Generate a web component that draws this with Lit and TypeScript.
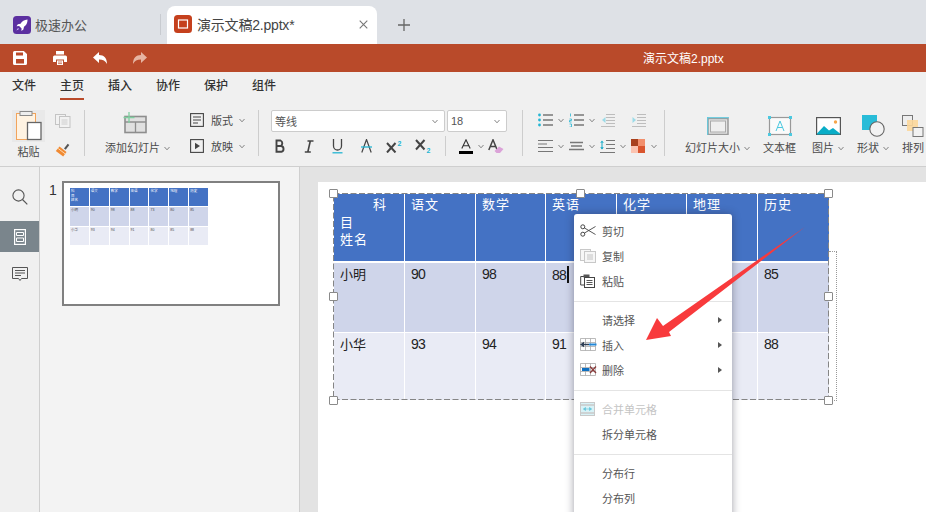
import { LitElement, html, svg, css } from "lit";
import { customElement } from "lit/decorators.js";

const chev = html`<svg class="chev" width="6" height="5" viewBox="0 0 6 5"><path d="M.5 1l2.500 2.800L5.500 1" fill="none" stroke="#777" stroke-width=".9"/></svg>`;
const S = (w: number, h: number, body: unknown) => html`<svg width=${w} height=${h} viewBox="0 0 ${w} ${h}">${body}</svg>`;

const rocket = html`<svg width="18" height="18" viewBox="0 0 18 18"><rect width="18" height="18" rx="3.500" fill="#5b2fa0"/><path d="M14.500 3.500c-3.200.3-5.400 1.800-7 4.200l-2.600.6-1.400 2 2.600-.2 2.500 2.400-.2 2.400 2-1.500.6-2.600c2.200-1.600 3.600-3.900 3.500-6.900z" fill="#fff"/><path d="M5 12l-1.600 2.600L6 13z" fill="#d9c8ff"/></svg>`;
const pptIcon = html`<svg width="18" height="18" viewBox="0 0 18 18"><rect width="18" height="18" rx="3.500" fill="#c5401d"/><rect x="4.500" y="5" width="9" height="8" fill="none" stroke="#fff" stroke-width="1.200"/></svg>`;
const save = S(14, 14, svg`<path d="M1.500 0h9.300L14 3v9.500a1.500 1.500 0 0 1-1.500 1.500h-11A1.500 1.500 0 0 1 0 12.500v-11A1.500 1.500 0 0 1 1.500 0z" fill="#fff"/><rect x="3" y="1.500" width="7" height="3" fill="#b94a2a"/><rect x="3" y="8" width="8" height="4.500" fill="#b94a2a"/>`);
const print = S(14, 14, svg`<rect x="3" y="0" width="8" height="3.500" fill="#fff"/><path d="M1.500 4.500h11A1.500 1.500 0 0 1 14 6v5h-3V8.500H3V11H0V6a1.500 1.500 0 0 1 1.500-1.500z" fill="#fff"/><rect x="4" y="9.500" width="6" height="4.500" fill="#fff"/><path d="M5 11h4M5 12.600h4" stroke="#b94a2a" stroke-width=".7"/>`);
const undo = S(14, 12, svg`<path d="M6 0v3c5 0 8 3 8 9-1.600-3.200-4-4.600-8-4.600V11L0 5.500z" fill="#fff"/>`);
const redo = S(14, 12, svg`<path d="M8 0v3C3 3 0 6 0 12c1.600-3.200 4-4.600 8-4.600V11l6-5.500z" fill="#e6b5a3"/>`);

const paste = S(33, 32, svg`<rect width="33" height="32" fill="#e9e9e9"/><rect x="4.500" y="3.500" width="19" height="26" fill="#fff3e2" stroke="#f2a45c"/><rect x="8" y="1.500" width="12" height="4" fill="#eee" stroke="#8a8a8a"/><rect x="15.500" y="12.500" width="13.500" height="17" fill="#fff" stroke="#666" stroke-width="1.300"/>`);
const copyDim = S(16, 14, svg`<g fill="#f2f2f2" stroke="#c4c4c4"><rect x=".5" y=".5" width="10" height="10"/><rect x="4.500" y="2.500" width="10.500" height="11"/></g><path d="M6.500 6h6M6.500 8h6M6.500 10h6" stroke="#c4c4c4" stroke-width=".8"/>`);
const brush = S(15, 14, svg`<path d="M9 5.500L12.700.8l1.600 1.200-3.600 4.800z" fill="#555"/><path d="M4.500 3.500l7 5.500-3.300 4.600L.8 8z" fill="#f08a33"/><path d="M3.200 5.500l7 5.400" stroke="#ffd9ae" stroke-width="1"/>`);
const addSlide = S(24, 22, svg`<rect x="2" y="4.500" width="21" height="16" fill="#e0e0e0" stroke="#8e8e8e" stroke-width="1.600"/><path d="M2 10h21M12.500 10v10" stroke="#8e8e8e" stroke-width="1.300"/><path d="M6 0v11M.5 5.500h11" stroke="#7fd0a0" stroke-width="1.300"/>`);
const layout = S(14, 14, svg`<rect x=".6" y=".6" width="12.800" height="12.800" fill="none" stroke="#444" stroke-width="1.100"/><path d="M3 4h8M3 7h8M3 10h5" stroke="#444" stroke-width="1.100"/>`);
const play = S(14, 14, svg`<rect x=".6" y=".6" width="12.800" height="12.800" fill="none" stroke="#444" stroke-width="1.100"/><path d="M5 3.700l5 3.300-5 3.300z" fill="#444"/>`);
const bold = S(12, 14, svg`<path d="M2.500 1.500h4a3 3 0 0 1 0 5.500h-4zM2.500 7h4.800a3 3 0 0 1 0 5.800H2.500z" fill="none" stroke="#444" stroke-width="1.900"/>`);
const italic = S(10, 13, svg`<path d="M3.500 1h6M.8 12h6M6.300 1L3.800 12" stroke="#444" stroke-width="1.600" fill="none"/>`);
const under = S(11, 15, svg`<path d="M1.500 0v7a4 4 0 0 0 8 0V0" fill="none" stroke="#444" stroke-width="1.300"/><path d="M.5 13.800h10" stroke="#23b5d3" stroke-width="1.300"/>`);
const strike = S(11, 14, svg`<path d="M.8 13.500L5.500.5l4.700 13" fill="none" stroke="#444" stroke-width="1.200"/><path d="M0 8h11" stroke="#23b5d3" stroke-width="1.300"/>`);
const sup = S(17, 13, svg`<path d="M1 3l8.500 9.500M9.500 3L1 12.500" stroke="#444" stroke-width="2"/><text x="11.500" y="6" font-size="7" font-weight="700" fill="#23b5d3">2</text>`);
const sub = S(17, 14, svg`<path d="M1 1l8.500 9.500M9.500 1L1 10.500" stroke="#444" stroke-width="2"/><text x="11.500" y="13.500" font-size="7" font-weight="700" fill="#23b5d3">2</text>`);
const colorA = S(14, 15, svg`<path d="M2.800 9.500L7 .8l4.200 8.700M4.300 6.800h5.400" fill="none" stroke="#333" stroke-width="1.100"/><rect y="12" width="14" height="3" fill="#000"/>`);
const eraser = S(16, 15, svg`<path d="M.8 11L5 .8 9.200 11M2.300 7.500h5.400" fill="none" stroke="#444" stroke-width="1.500"/><path d="M6.500 12l4.500-4.500 4.500 2.500-3.500 4H8.500z" fill="#dba3d8"/>`);
const lst = (c: string) => S(15, 14, svg`<g fill=${c}><circle cx="1.500" cy="2" r="1.400"/><circle cx="1.500" cy="7" r="1.400"/><circle cx="1.500" cy="12" r="1.400"/></g><path d="M5 2h10M5 7h10M5 12h10" stroke="#777" stroke-width="1.300"/>`);
const olist = S(15, 14, svg`<path d="M1.500 .5v3M.5 6h2v1.500h-2V9h2M.5 11h2v3h-2" fill="none" stroke="#23b5d3" stroke-width=".8"/><path d="M5 2h10M5 7h10M5 12h10" stroke="#777" stroke-width="1.300"/>`);
const indentL = S(15, 14, svg`<path d="M2 7l3.500-3v6z" fill="#9bdbe8"/><path d="M6 1.500h9M6 4.500h9M6 7.500h9M6 10.500h9M1 13.500h14" stroke="#bdbdbd" stroke-width="1"/>`);
const indentR = S(15, 14, svg`<path d="M5 7L1.500 4v6z" fill="#9bdbe8"/><path d="M6 1.500h9M6 4.500h9M6 7.500h9M6 10.500h9M1 13.500h14" stroke="#bdbdbd" stroke-width="1"/>`);
const alignL = S(15, 14, svg`<path d="M0 1.500h15M0 5h9M0 8.500h15M0 12.500h15" stroke="#777" stroke-width="1.200"/>`);
const alignC = S(15, 14, svg`<path d="M1 3.500h13M2 7h11M0 10.500h15" stroke="#777" stroke-width="1.300"/>`);
const spacing = S(15, 14, svg`<path d="M2 .5l1.800 2.200H.2zM2 9.500L3.800 7.300H.2z" fill="#12a9c7" transform="translate(0 1)"/><path d="M2 4v6" stroke="#12a9c7"/><path d="M0 13.500h15M6 1.500h9M6 5.500h9M6 9.500h9" stroke="#777" stroke-width="1.200"/>`);
const fill = S(14, 14, svg`<rect width="7" height="7" fill="#a8401d"/><rect x="7" width="7" height="7" fill="#f28f6c"/><rect y="7" width="7" height="7" fill="#fbc3b0"/><rect x="7" y="7" width="7" height="7" fill="#d9552e"/>`);

const slideSize = S(22, 18, svg`<rect x="1" y="1.500" width="20" height="16" fill="#e2e2e2" stroke="#9a9a9a" stroke-width="1.500"/><rect x="3.500" y="4" width="15" height="11" fill="#efefef" stroke="#aaa"/><path d="M0 .7h22M.7 0v18" stroke="#5ccbe0" stroke-width="1"/>`);
const textBox = S(24, 20, svg`<rect x="1.500" y="1.500" width="21" height="17" fill="#fafafa" stroke="#999" stroke-width="1.200"/><g fill="#4cc9e0"><rect width="3" height="3"/><rect x="21" width="3" height="3"/><rect y="17" width="3" height="3"/><rect x="21" y="17" width="3" height="3"/></g><path d="M8 15l4-10 4 10M9.300 11.500h5.400" fill="none" stroke="#4cc9e0" stroke-width="1"/>`);
const picture = S(25, 18, svg`<rect x=".6" y=".6" width="23.800" height="16.800" fill="#fff" stroke="#555" stroke-width="1.200"/><circle cx="19.500" cy="5" r="1.700" fill="#f5a54a"/><path d="M1 16.500l7-7.500 5 4.500 4-2.500 7 5.500v1H1z" fill="#08adc7"/>`);
const shape = S(23, 22, svg`<rect width="15" height="15" fill="#29bcd8"/><circle cx="15" cy="14" r="7.200" fill="#f2f2f2" stroke="#666" stroke-width="1.100"/>`);
const arrange = S(22, 22, svg`<rect x=".5" y=".5" width="10" height="10" fill="#eee" stroke="#777"/><rect x="5" y="5" width="11" height="11" fill="#fcd79a" opacity=".9"/><rect x="11" y="12.500" width="10" height="9" fill="#f2f2f2" stroke="#777"/>`);

const search = S(16, 16, svg`<circle cx="6.500" cy="6.500" r="5.600" fill="none" stroke="#555" stroke-width="1.100"/><path d="M10.500 10.500l4.800 4.800" stroke="#555" stroke-width="1.200"/>`);
const pages = S(12, 16, svg`<rect x=".6" y=".6" width="10.800" height="14.800" fill="none" stroke="#fff" stroke-width="1.200"/><path d="M2.500 3.500h7v3h-7zM2.500 9h7v3.500h-7z" fill="none" stroke="#fff"/>`);
const comment = S(16, 15, svg`<path d="M.5.500h15v11H9.500L8 13.500 6.500 11.500h-6z" fill="none" stroke="#555"/><path d="M3 3.500h10M3 6h10M3 8.500h6" stroke="#555"/>`);

const scissors = S(16, 13, svg`<circle cx="2.800" cy="2.800" r="2" fill="none" stroke="#444"/><circle cx="2.800" cy="10.200" r="2" fill="none" stroke="#444"/><path d="M4.500 4l11 6.500M4.500 9l11-6.500" stroke="#444" stroke-width=".9"/>`);
const copyMenu = S(16, 14, svg`<g fill="#f6f6f6" stroke="#c8c8c8"><rect x=".5" y=".5" width="10" height="11"/><rect x="4.500" y="2.500" width="11" height="11"/></g><path d="M7 6h6M7 8h6M7 10h6" stroke="#b8b8b8" stroke-width=".8"/>`);
const pasteMenu = S(15, 14, svg`<path d="M4 2.500H.7v8.500H4" fill="none" stroke="#444"/><rect x="3.500" y=".5" width="6" height="3" fill="#555"/><rect x="4.500" y="3.500" width="10" height="10" fill="#fff" stroke="#444"/><path d="M6.500 6.500h6M6.500 8.500h6M6.500 10.500h6" stroke="#444" stroke-width=".9"/>`);
const insertT = S(17, 13, svg`<path d="M.5.500h15v12H.5zM.5 4.500h15M.5 8.500h15M5.500.500v12M10.500.500v12" fill="none" stroke="#aaa" stroke-width=".8"/><path d="M0 6.500l4-2.800v2h5v1.600H4v2z" fill="#2f3f55"/><path d="M9 5.500h7.500v2H9z" fill="#2288d8"/>`);
const deleteT = S(17, 13, svg`<path d="M.5.500h15v12H.5zM.5 4.500h15M.5 8.500h15M5.500.500v12M10.500.500v12" fill="none" stroke="#aaa" stroke-width=".8"/><path d="M2 5h7.500v3H2z" fill="#0f6fc0"/><path d="M10 3.500l6 6.500M16 3.500l-6 6.500" stroke="#8a3a3a" stroke-width="1.300"/>`);
const merge = S(15, 14, svg`<rect x=".5" y=".5" width="14" height="13" fill="#d8f2f7" stroke="#c9c9c9"/><path d="M.5 3h14M.5 11h14" stroke="#c9c9c9" stroke-width="1.500"/><path d="M3.500 7h8M3.500 7l2-1.500v3zM11.500 7l-2-1.500v3z" stroke="#66c5da" stroke-width=".7" fill="#66c5da"/>`);

const cols = ["语文", "数学", "英语", "化学", "地理", "历史"];
const rows = [
  { name: "小明", vals: ["90", "98", "88", "73", "80", "85"] },
  { name: "小华", vals: ["93", "94", "91", "80", "85", "88"] },
];

@customElement("app-root")
export class AppRoot extends LitElement {
  static styles = css`
    :host { display: block; width: 926px; height: 512px; overflow: hidden; position: relative; background: #f0f0f0;
      font-family: "Liberation Sans", "Noto Sans CJK SC", sans-serif; color: #4a4a4a; font-size: 11px; }
    svg { display: block; flex: none; }
    .tabs { height: 44px; background: #dee1e6; display: flex; align-items: flex-end; }
    .tab-home { width: 161px; display: flex; align-items: center; gap: 4px; padding-left: 13px; box-sizing: border-box; font-size: 13px; color: #555; border-right: 1px solid #c8cbd0; height: 21px; margin-bottom: 9px; }
    .tab-active { margin-left: 6px; width: 210px; height: 38px; background: #fff; border-radius: 8px 8px 0 0; display: flex; align-items: center; padding: 0 9px 2px 7px; box-sizing: border-box; gap: 5px; font-size: 14px; color: #444; letter-spacing: -.2px; }
    .tab-active .close { margin-left: auto; }
    .plus { margin: 0 0 13px 21px; }
    .titlebar { height: 28px; background: #b94a2a; display: flex; align-items: center; padding-left: 13px; color: #fff; font-size: 12px; }
    .titlebar span { margin-top: -2px; }
    .qa { display: flex; align-items: center; width: 630px; gap: 26px; }
    .menu { height: 31px; display: flex; gap: 24px; padding-left: 12px; font-size: 12px; color: #333; font-weight: 500; box-sizing: border-box; }
    .menu span { height: 28px; line-height: 28px; box-sizing: border-box; }
    .menu .on { border-bottom: 2px solid #b94a2a; }
    .ribbon { height: 64px; box-sizing: border-box; border-bottom: 1px solid #cfcfcf; padding-top: 7px; display: flex; overflow: hidden; white-space: nowrap; }
    .sep { width: 1px; height: 46px; background: #cdcdcd; flex: none; }
    .g { height: 46px; flex: none; box-sizing: border-box; display: flex; }
    .g1 { width: 84px; padding-left: 12px; }
    .paste-col { display: flex; flex-direction: column; align-items: center; width: 33px; }
    .paste-col span { margin-top: 3px; line-height: 14px; }
    .clip-col { margin: 4px 0 0 10px; display: flex; flex-direction: column; gap: 15px; }
    .g2 { width: 173px; padding-left: 20px; }
    .add-col { display: flex; flex-direction: column; align-items: flex-start; width: 68px; }
    .lbl { display: flex; align-items: center; gap: 4px; line-height: 16px; }
    .add-col .lbl { margin-top: 6px; }
    .add-icon { margin: 2px 0 0 18px; }
    .mode-col { margin-left: 17px; display: flex; flex-direction: column; gap: 12px; padding-top: 3px; }
    .mode { display: flex; align-items: center; height: 14px; }
    .mode .t { margin-left: 7px; margin-right: 6px; }
    .g3 { width: 263px; padding-left: 12px; flex-direction: column; }
    .selects { display: flex; gap: 2px; }
    .sel { height: 22px; background: #fff; border: 1px solid #ccc; box-sizing: border-box; border-radius: 2px; display: flex; align-items: center; justify-content: space-between; padding: 0 6px 0 3px; font-size: 11px; color: #555; }
    .sel.font { width: 174px; }
    .sel.size { width: 60px; }
    .fmt { display: flex; align-items: center; margin: 4px 0 0 -5px; height: 20px; }
    .fb { width: 28.6px; display: flex; justify-content: center; flex: none; }
    .isep { width: 1px; height: 20px; background: #cdcdcd; margin: 0 10px 0 7.4px; flex: none; }
    .cb { width: 20px; display: flex; justify-content: center; flex: none; }
    .cc { width: 10px; display: flex; justify-content: center; flex: none; }
    .g4 { width: 141px; padding-left: 14px; display: grid; grid-template-columns: repeat(4, 16px 15px); grid-auto-rows: 20px; row-gap: 6px; }
    .g4 > div { display: flex; align-items: center; justify-content: center; }
    .g5 { padding-left: 20px; gap: 13px; }
    .big { display: flex; flex-direction: column; align-items: center; }
    .bi { height: 30px; display: flex; align-items: center; padding-top: 2px; box-sizing: border-box; }
    .mr { margin-right: 3px; }
    .body { height: 345px; display: flex; }
    .side { width: 40px; flex: none; box-sizing: border-box; border-right: 1px solid #cfcfcf; padding-top: 13px; display: flex; flex-direction: column; }
    .side div { display: flex; align-items: center; justify-content: center; }
    .side .s1 { height: 33px; margin-bottom: 8px; }
    .side .on { background: #7a858c; margin-bottom: 7px; height: 31px; }
    .side .s3 { height: 31px; }
    .thumbs { width: 260px; flex: none; box-sizing: border-box; background: #f3f3f3; border-right: 1px solid #cfcfcf; display: flex; padding: 14px 0 0 9px; }
    .num { font-size: 14px; color: #333; width: 13px; line-height: 18px; }
    .thumb { width: 218px; height: 125px; box-sizing: border-box; border: 2px solid #808080; background: #fff; padding: 5px 6px; }
    .tt { display: grid; grid-template-columns: repeat(7, 18.86px); grid-template-rows: 18px 19px 18px; gap: 1px; width: 138px; font-size: 3.5px; line-height: 4.5px; }
    .tt div { padding: 1px; box-sizing: border-box; overflow: hidden; }
    .gutter { width: 18px; flex: none; background: #e3e3e3; }
    .stage { flex: 1; background: #e3e3e3; padding-top: 15px; display: flex; min-width: 0; }
    .slide { flex: 1; background: #fff; position: relative; padding: 12px 0 0 16px; overflow: hidden; }
    .tbl-wrap { position: relative; width: 495px; height: 206px; }
    .tbl { display: grid; grid-template-columns: 70px 70px 69px 70px 69px 70px 71px; grid-template-rows: 67px 70px 67px; gap: 1px; background: #fff; font-size: 13px; line-height: 17.5px; }
    .c { padding: 3px 6px; box-sizing: border-box; color: #222; }
    .h { background: #4472c4; color: #fff; letter-spacing: 1px; padding-top: 2px; height: 67px; }
    .thead { height: auto; padding: 1px; letter-spacing: 0; }
    .r1 { background: #cfd5ea; margin-top: 1px; height: 69px; }
    .r2 { background: #e9ebf5; height: 67px; }
    .thumb-r1 { background: #cfd5ea; }
    .thumb-r2 { background: #e9ebf5; }
    .v { font-size: 14px; letter-spacing: -.7px; }
    .corner-top { text-align: right; padding-right: 11px; }
    .caret { display: inline-block; width: 1.5px; height: 17px; background: #111; vertical-align: -3px; margin-left: 1px; }
    .dash { position: absolute; left: -1px; top: -1px; pointer-events: none; }
    .dot { position: absolute; left: 495px; top: 57px; width: 8px; height: 150px; border: 1px dotted #999; border-left: 0; box-sizing: border-box; }
    .hd { position: absolute; width: 9px; height: 9px; background: #fff; border: 1px solid #8a8a8a; box-sizing: border-box; border-radius: 1px; }
    .ctx { position: absolute; left: 256px; top: 32px; width: 158px; height: 320px; background: #fff; border-radius: 3px; box-shadow: 0 0 9px rgba(40,40,60,.45); padding-top: 4px; box-sizing: border-box; font-size: 11px; color: #555; }
    .it { height: 25px; display: grid; grid-template-columns: 28px 1fr 14px; align-items: center; }
    .it .ic { padding-left: 6px; }
    .it.dis { color: #c4c4c4; }
    .tri { width: 0; height: 0; border-left: 4px solid #555; border-top: 3.5px solid transparent; border-bottom: 3.5px solid transparent; }
    .ms { height: 1px; background: #e4e4e4; margin: 8px 0 5px; }
    .arrow { position: absolute; left: 0; top: 0; }
  `;

  private mi(icon: unknown, text: string, sub = false, dis = false) {
    return html`<div class="it ${dis ? "dis" : ""}"><div class="ic">${icon}</div><div>${text}</div>${sub ? html`<div class="tri"></div>` : html`<div></div>`}</div>`;
  }

  private handles() {
    const pts = [[-5, -5], [242, -5], [490, -5], [-5, 98], [490, 98], [-5, 202], [490, 202]];
    return pts.map(([x, y]) => html`<div class="hd" style="left:${x}px;top:${y}px"></div>`);
  }

  render() {
    return html`
      <div class="tabs">
        <div class="tab-home">${rocket}<span>极速办公</span></div>
        <div class="tab-active">${pptIcon}<span>演示文稿2.pptx*</span>
          <svg class="close" width="9" height="9" viewBox="0 0 9 9"><path d="M.7.700l7.600 7.600M8.300.700L.7 8.300" stroke="#777" stroke-width="1.100"/></svg>
        </div>
        <svg class="plus" width="12" height="12" viewBox="0 0 12 12"><path d="M6 0v12M0 6h12" stroke="#666" stroke-width="1.300"/></svg>
      </div>
      <div class="titlebar"><div class="qa">${save}${print}${undo}${redo}</div><span>演示文稿2.pptx</span></div>
      <div class="menu"><span>文件</span><span class="on">主页</span><span>插入</span><span>协作</span><span>保护</span><span>组件</span></div>
      <div class="ribbon">
        <div class="g g1">
          <div class="paste-col">${paste}<span>粘贴</span></div>
          <div class="clip-col">${copyDim}${brush}</div>
        </div>
        <div class="sep"></div>
        <div class="g g2">
          <div class="add-col"><div class="add-icon">${addSlide}</div><div class="lbl">添加幻灯片${chev}</div></div>
          <div class="mode-col">
            <div class="mode">${layout}<span class="t">版式</span>${chev}</div>
            <div class="mode">${play}<span class="t">放映</span>${chev}</div>
          </div>
        </div>
        <div class="sep"></div>
        <div class="g g3">
          <div class="selects">
            <div class="sel font"><span>等线</span>${chev}</div>
            <div class="sel size"><span>18</span>${chev}</div>
          </div>
          <div class="fmt">
            <div class="fb">${bold}</div><div class="fb">${italic}</div><div class="fb">${under}</div>
            <div class="fb">${strike}</div><div class="fb">${sup}</div><div class="fb">${sub}</div>
            <div class="isep"></div>
            <div class="cb">${colorA}</div><div class="cc">${chev}</div><div class="cb">${eraser}</div>
          </div>
        </div>
        <div class="sep"></div>
        <div class="g g4">
          <div>${lst("#23b5d3")}</div><div>${chev}</div><div>${olist}</div><div>${chev}</div><div>${indentL}</div><div></div><div>${indentR}</div><div></div>
          <div>${alignL}</div><div>${chev}</div><div>${alignC}</div><div>${chev}</div><div>${spacing}</div><div>${chev}</div><div>${fill}</div><div>${chev}</div>
        </div>
        <div class="sep"></div>
        <div class="g g5">
          <div class="big"><div class="bi">${slideSize}</div><div class="lbl">幻灯片大小${chev}</div></div>
          <div class="big mr"><div class="bi">${textBox}</div><div class="lbl">文本框</div></div>
          <div class="big"><div class="bi">${picture}</div><div class="lbl">图片${chev}</div></div>
          <div class="big"><div class="bi">${shape}</div><div class="lbl">形状${chev}</div></div>
          <div class="big"><div class="bi">${arrange}</div><div class="lbl">排列</div></div>
        </div>
      </div>
      <div class="body">
        <div class="side">
          <div class="s1">${search}</div>
          <div class="on">${pages}</div>
          <div class="s3">${comment}</div>
        </div>
        <div class="thumbs">
          <div class="num">1</div>
          <div class="thumb">
            <div class="tt">
              <div class="h thead">科<br>目<br>姓名</div>
              ${cols.map((c) => html`<div class="h thead">${c}</div>`)}
              ${rows.map((r, i) => html`
                <div class=${i ? "thumb-r2" : "thumb-r1"}>${r.name}</div>
                ${r.vals.map((v) => html`<div class=${i ? "thumb-r2" : "thumb-r1"}>${v}</div>`)}
              `)}
            </div>
          </div>
        </div>
        <div class="gutter"></div>
        <div class="stage">
          <div class="slide">
            <div class="tbl-wrap">
              <div class="tbl">
                <div class="c h"><div class="corner-top">科</div>目<br>姓名</div>
                ${cols.map((c) => html`<div class="c h">${c}</div>`)}
                ${rows.map((r, i) => html`
                  <div class="c ${i ? "r2" : "r1"}">${r.name}</div>
                  ${r.vals.map((v, j) => html`<div class="c ${i ? "r2" : "r1"}"><span class="v">${v}</span>${!i && j === 2 ? html`<span class="caret"></span>` : ""}</div>`)}
                `)}
              </div>
              <svg class="dash" width="497" height="208" viewBox="0 0 497 208"><rect x=".5" y=".5" width="495" height="206" fill="none" stroke="#858585" stroke-dasharray="6 2.500"/></svg>
              <div class="dot"></div>
              ${this.handles()}
            </div>
            <div class="ctx">
              ${this.mi(scissors, "剪切")}
              ${this.mi(copyMenu, "复制")}
              ${this.mi(pasteMenu, "粘贴")}
              <div class="ms"></div>
              ${this.mi("", "请选择", true)}
              ${this.mi(insertT, "插入", true)}
              ${this.mi(deleteT, "删除", true)}
              <div class="ms"></div>
              ${this.mi(merge, "合并单元格", false, true)}
              ${this.mi("", "拆分单元格")}
              <div class="ms"></div>
              ${this.mi("", "分布行")}
              ${this.mi("", "分布列")}
            </div>
            <svg class="arrow" width="608" height="330" viewBox="0 0 608 330">
              <path d="M328 158L339 136 345 144 487 45 351 150 353 154z" fill="#f83a3c"/>
            </svg>
          </div>
        </div>
      </div>
    `;
  }
}
